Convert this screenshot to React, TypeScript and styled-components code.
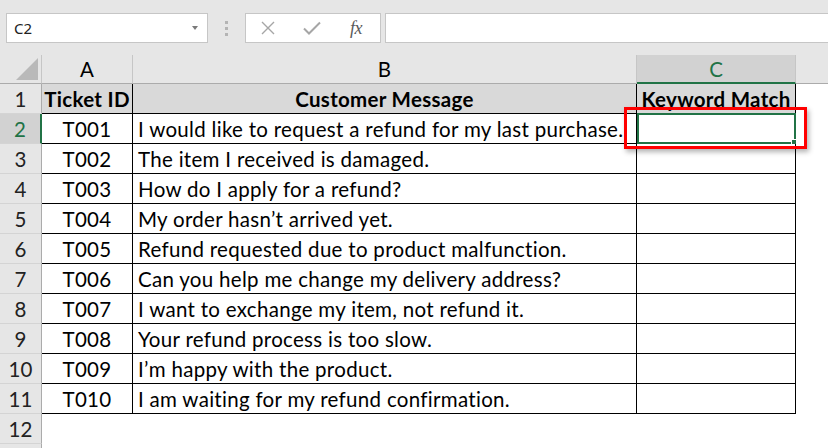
import React from "react";
import styled, { createGlobalStyle } from "styled-components";

const GlobalStyle = createGlobalStyle`
  html, body {
    margin: 0;
    padding: 0;
    background: #ffffff;
  }
  body {
    font-family: Lato, "Liberation Sans", sans-serif;
  }
  * {
    box-sizing: border-box;
  }
`;

const Page = styled.div`
  width: 828px;
  height: 448px;
  overflow: hidden;
  background: #ffffff;
`;

const FormulaBar = styled.div`
  display: flex;
  align-items: flex-start;
  height: 55px;
  padding: 13px 0 0 6px;
  background: #e6e6e6;
`;

const NameBox = styled.div`
  display: flex;
  align-items: center;
  justify-content: space-between;
  width: 202px;
  height: 30px;
  padding: 0 9px 0 7px;
  background: #ffffff;
  border: 1px solid #c6c6c6;
  font-family: "Segoe UI", "Noto Sans", sans-serif;
  font-size: 15px;
  color: #222222;
`;

const Caret = styled.span`
  width: 0;
  height: 0;
  border-left: 3.5px solid transparent;
  border-right: 3.5px solid transparent;
  border-top: 4px solid #7a7a7a;
`;

const Grip = styled.div`
  display: flex;
  flex-direction: column;
  align-items: center;
  justify-content: center;
  gap: 3px;
  width: 37px;
  height: 30px;
`;

const GripDot = styled.span`
  width: 3px;
  height: 3px;
  background: #b4b4b4;
`;

const FxGroup = styled.div`
  display: flex;
  width: 136px;
  height: 30px;
  background: #ffffff;
  border: 1px solid #c6c6c6;
`;

const FxButton = styled.div`
  display: flex;
  align-items: center;
  justify-content: center;
  width: 44px;
  height: 100%;
`;

const FxLabel = styled.span`
  font-family: "Liberation Serif", "DejaVu Serif", serif;
  font-style: italic;
  font-size: 18px;
  color: #5a5a5a;
  letter-spacing: -0.5px;
`;

const FormulaInput = styled.div`
  flex: 1;
  height: 30px;
  margin-left: 4px;
  background: #ffffff;
  border: 1px solid #c6c6c6;
  border-right: none;
`;

const Sheet = styled.div`
  display: grid;
  grid-template-columns: 42px 91px 504px 159px 1fr;
  grid-template-rows: 29px;
  grid-auto-rows: 30px;
  font-size: 20.5px;
  color: #000000;
`;

const Corner = styled.div`
  display: flex;
  align-items: flex-end;
  justify-content: flex-end;
  padding: 0 3px 3px 0;
  background: #e6e6e6;
  border-right: 1px solid #c6c6c6;
  border-bottom: 1px solid #ababab;
`;

const CornerTriangle = styled.span`
  width: 22px;
  height: 22px;
  background: #b9b9b9;
  clip-path: polygon(100% 0, 100% 100%, 0 100%);
`;

const ColHeader = styled.div<{ $active?: boolean; $blank?: boolean }>`
  display: flex;
  align-items: center;
  justify-content: center;
  background: ${(p) => (p.$active ? "#d2d2d2" : "#e6e6e6")};
  color: ${(p) => (p.$active ? "#217346" : "#000000")};
  border-right: ${(p) => (p.$blank ? "none" : "1px solid #c6c6c6")};
  border-bottom: ${(p) => (p.$active ? "2px solid #217346" : "1px solid #ababab")};
`;

const RowHeader = styled.div<{ $active?: boolean }>`
  display: flex;
  align-items: center;
  justify-content: center;
  background: ${(p) => (p.$active ? "#d2d2d2" : "#e6e6e6")};
  color: ${(p) => (p.$active ? "#217346" : "#222222")};
  border-right: ${(p) => (p.$active ? "2px solid #217346" : "1px solid #ababab")};
  border-bottom: 1px solid #d4d4d4;
`;

const Cell = styled.div<{ $head?: boolean; $center?: boolean; $boxed?: boolean }>`
  position: relative;
  display: flex;
  align-items: center;
  justify-content: ${(p) => (p.$center ? "center" : "flex-start")};
  padding: 0 5px;
  white-space: nowrap;
  letter-spacing: 0.3px;
  background: ${(p) => (p.$head ? "#d9d9d9" : "#ffffff")};
  font-weight: ${(p) => (p.$head ? 700 : 400)};
  border-right: ${(p) => (p.$boxed ? "1px solid #000000" : "none")};
  border-bottom: ${(p) => (p.$boxed ? "1px solid #000000" : "none")};
`;

const Selection = styled.span`
  position: absolute;
  top: -1px;
  left: 0;
  right: -1px;
  bottom: -1px;
  border: 2px solid #217346;
  pointer-events: none;
`;

const FillHandle = styled.span`
  position: absolute;
  right: -4px;
  bottom: -4px;
  width: 7px;
  height: 7px;
  background: #217346;
  border: 1px solid #ffffff;
`;

const RedMark = styled.span`
  position: absolute;
  top: -7px;
  left: -13px;
  right: -12px;
  bottom: -6px;
  border: 3px solid #ff0000;
  box-shadow: 2px 3px 5px rgba(0, 0, 0, 0.3);
  pointer-events: none;
  z-index: 2;
`;

const tickets = [
  ["T001", "I would like to request a refund for my last purchase."],
  ["T002", "The item I received is damaged."],
  ["T003", "How do I apply for a refund?"],
  ["T004", "My order hasn\u2019t arrived yet."],
  ["T005", "Refund requested due to product malfunction."],
  ["T006", "Can you help me change my delivery address?"],
  ["T007", "I want to exchange my item, not refund it."],
  ["T008", "Your refund process is too slow."],
  ["T009", "I\u2019m happy with the product."],
  ["T010", "I am waiting for my refund confirmation."],
];

function CancelIcon() {
  return (
    <svg width="14" height="14" viewBox="0 0 14 14">
      <path d="M1 1L13 13M13 1L1 13" stroke="#a6a6a6" strokeWidth="1.4" fill="none" />
    </svg>
  );
}

function EnterIcon() {
  return (
    <svg width="18" height="14" viewBox="0 0 18 14">
      <path d="M1 7.5L6 12.5L17 1.5" stroke="#a6a6a6" strokeWidth="2" fill="none" />
    </svg>
  );
}

export default function App() {
  return (
    <Page>
      <GlobalStyle />
      <FormulaBar>
        <NameBox>
          C2
          <Caret />
        </NameBox>
        <Grip>
          <GripDot />
          <GripDot />
          <GripDot />
        </Grip>
        <FxGroup>
          <FxButton>
            <CancelIcon />
          </FxButton>
          <FxButton>
            <EnterIcon />
          </FxButton>
          <FxButton>
            <FxLabel>fx</FxLabel>
          </FxButton>
        </FxGroup>
        <FormulaInput />
      </FormulaBar>

      <Sheet>
        <Corner>
          <CornerTriangle />
        </Corner>
        <ColHeader>A</ColHeader>
        <ColHeader>B</ColHeader>
        <ColHeader $active>C</ColHeader>
        <ColHeader $blank />

        <RowHeader>1</RowHeader>
        <Cell $head $center $boxed>Ticket ID</Cell>
        <Cell $head $center $boxed>Customer Message</Cell>
        <Cell $head $center $boxed>Keyword Match</Cell>
        <Cell />

        {tickets.map(([id, message], i) => (
          <React.Fragment key={id}>
            <RowHeader $active={i === 0}>{i + 2}</RowHeader>
            <Cell $center $boxed>{id}</Cell>
            <Cell $boxed>{message}</Cell>
            <Cell $boxed>
              {i === 0 && (
                <>
                  <Selection>
                    <FillHandle />
                  </Selection>
                  <RedMark />
                </>
              )}
            </Cell>
            <Cell />
          </React.Fragment>
        ))}

        <RowHeader>12</RowHeader>
        <Cell />
        <Cell />
        <Cell />
        <Cell />
        <RowHeader />
      </Sheet>
    </Page>
  );
}
